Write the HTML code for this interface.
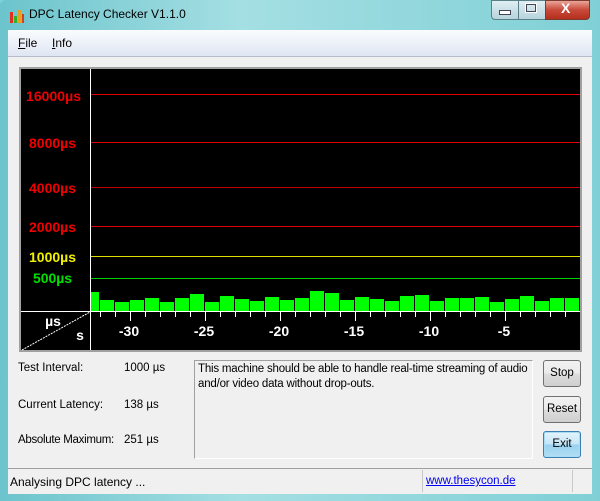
<!DOCTYPE html><html><head><style>
body{margin:0;width:600px;height:501px;overflow:hidden;background:#7fcfd6;font-family:"Liberation Sans",sans-serif;font-size:11.5px;position:relative}
.a{position:absolute}
.btn{position:absolute;left:543px;width:36px;height:25px;border:1px solid #707070;border-radius:3px;background:linear-gradient(#f2f2f2,#ebebeb 50%,#dddddd 50%,#cfcfcf);text-align:center;line-height:25px;font-size:11.5px}
</style></head><body>
<div class="a" style="left:0;top:0;width:600px;height:501px;background:linear-gradient(90deg,#6cc4cc,#a4dfe3 40%,#7fd0d6);border-radius:6px 6px 0 0"></div>
<div class="a" style="left:9px;top:8px;width:16px;height:16px">
<div class="a" style="left:1px;top:4px;width:3px;height:11px;background:#e03020"></div>
<div class="a" style="left:5px;top:8px;width:3px;height:7px;background:#30b030"></div>
<div class="a" style="left:9px;top:2px;width:3px;height:13px;background:#e8a020"></div>
<div class="a" style="left:13px;top:6px;width:2px;height:9px;background:#d04020"></div></div>
<div class="a" style="left:29px;top:7px;font-size:12px;color:#000">DPC Latency Checker V1.1.0</div>
<div class="a" style="left:491px;top:0;width:26px;height:18px;border:1px solid #5a7f86;border-radius:0 0 0 4px;background:linear-gradient(#dfeef2,#b7d4dc)"></div>
<div class="a" style="left:518px;top:0;width:26px;height:18px;border:1px solid #5a7f86;background:linear-gradient(#dfeef2,#b7d4dc)"></div>
<div class="a" style="left:545px;top:0;width:43px;height:18px;border:1px solid #7a3b30;border-radius:0 0 4px 0;background:linear-gradient(#e9a597,#c8493a 50%,#b52e1c)"></div>
<div class="a" style="left:499px;top:10px;width:10px;height:3px;background:#fff;border:1px solid #445"></div>
<div class="a" style="left:526px;top:4px;width:8px;height:6px;border:1px solid #445;outline:1px solid #fff"></div>
<div class="a" style="left:561px;top:0px;color:#fff;font-weight:bold;font-size:14px">X</div>
<div class="a" style="left:8px;top:30px;width:584px;height:463px;background:#f0f0f0"></div>
<div class="a" style="left:8px;top:30px;width:584px;height:26px;background:linear-gradient(#fafcfe,#dfe5f2);border-bottom:1px solid #b5bdcb"></div>
<div class="a" style="left:18px;top:36px;font-size:12px"><u>F</u>ile</div>
<div class="a" style="left:52px;top:36px;font-size:12px"><u>I</u>nfo</div>
<svg class="a" style="left:19px;top:67px" width="563" height="286" viewBox="19 67 563 286">
<rect x="19" y="67" width="563" height="285" fill="#a0a0a0"/>
<rect x="21" y="69" width="559" height="281" fill="#000"/>
<g stroke-width="1">
<line x1="91" y1="94.5" x2="580" y2="94.5" stroke="#e00000"/>
<line x1="91" y1="142.5" x2="580" y2="142.5" stroke="#e00000"/>
<line x1="91" y1="187.5" x2="580" y2="187.5" stroke="#c00000"/>
<line x1="91" y1="226.5" x2="580" y2="226.5" stroke="#e00000"/>
<line x1="91" y1="256.5" x2="580" y2="256.5" stroke="#e0e000"/>
<line x1="91" y1="278.5" x2="580" y2="278.5" stroke="#00d000"/>
</g>
<g font-family="Liberation Sans" font-weight="bold" font-size="14" text-anchor="end">
<text x="81" y="101" fill="#f00000" textLength="55">16000µs</text>
<text x="76" y="148" fill="#f00000" textLength="47">8000µs</text>
<text x="76" y="193" fill="#f00000" textLength="47">4000µs</text>
<text x="76" y="232" fill="#f00000" textLength="47">2000µs</text>
<text x="76" y="262" fill="#f0f000" textLength="47">1000µs</text>
<text x="72" y="283" fill="#00e000" textLength="39">500µs</text>
</g>
<g fill="#00ff00">
<rect x="91" y="292" width="8" height="19"/>
<rect x="100" y="300" width="14" height="11"/><rect x="115" y="302" width="14" height="9"/><rect x="130" y="300" width="14" height="11"/><rect x="145" y="298" width="14" height="13"/><rect x="160" y="302" width="14" height="9"/><rect x="175" y="298" width="14" height="13"/><rect x="190" y="294" width="14" height="17"/><rect x="205" y="302" width="14" height="9"/><rect x="220" y="296" width="14" height="15"/><rect x="235" y="299" width="14" height="12"/><rect x="250" y="301" width="14" height="10"/><rect x="265" y="297" width="14" height="14"/><rect x="280" y="300" width="14" height="11"/><rect x="295" y="298" width="14" height="13"/><rect x="310" y="291" width="14" height="20"/><rect x="325" y="293" width="14" height="18"/><rect x="340" y="300" width="14" height="11"/><rect x="355" y="297" width="14" height="14"/><rect x="370" y="299" width="14" height="12"/><rect x="385" y="301" width="14" height="10"/><rect x="400" y="296" width="14" height="15"/><rect x="415" y="295" width="14" height="16"/><rect x="430" y="301" width="14" height="10"/><rect x="445" y="298" width="14" height="13"/><rect x="460" y="298" width="14" height="13"/><rect x="475" y="297" width="14" height="14"/><rect x="490" y="302" width="14" height="9"/><rect x="505" y="299" width="14" height="12"/><rect x="520" y="296" width="14" height="15"/><rect x="535" y="301" width="14" height="10"/><rect x="550" y="298" width="14" height="13"/><rect x="565" y="298" width="14" height="13"/>
</g>
<line x1="90.5" y1="69" x2="90.5" y2="350" stroke="#fff"/>
<line x1="21" y1="311.5" x2="580" y2="311.5" stroke="#fff"/>
<line x1="22" y1="350" x2="90" y2="312" stroke="#fff" stroke-dasharray="2 1"/>
<g stroke="#fff">
<path d="M100.5 312v5M115.5 312v5M145.5 312v5M160.5 312v5M175.5 312v5M190.5 312v5M220.5 312v5M235.5 312v5M250.5 312v5M265.5 312v5M295.5 312v5M310.5 312v5M325.5 312v5M340.5 312v5M370.5 312v5M385.5 312v5M400.5 312v5M415.5 312v5M445.5 312v5M460.5 312v5M475.5 312v5M490.5 312v5M520.5 312v5M535.5 312v5M550.5 312v5M565.5 312v5"/>
<path d="M130.5 312v9M205.5 312v9M280.5 312v9M355.5 312v9M430.5 312v9M505.5 312v9"/>
</g>
<g font-family="Liberation Sans" font-weight="bold" font-size="14" fill="#fff" text-anchor="middle">
<text x="129" y="336">-30</text><text x="204" y="336">-25</text><text x="279" y="336">-20</text><text x="354" y="336">-15</text><text x="429" y="336">-10</text><text x="504" y="336">-5</text>
<text x="53" y="326">µs</text><text x="80" y="340">s</text>
</g>
</svg>
<div class="a" style="left:18px;top:362px">Test Interval:</div>
<div class="a" style="left:124px;top:362px">1000 µs</div>
<div class="a" style="left:18px;top:399px">Current Latency:</div>
<div class="a" style="left:124px;top:399px">138 µs</div>
<div class="a" style="left:18px;top:434px;letter-spacing:-0.3px">Absolute Maximum:</div>
<div class="a" style="left:124px;top:434px">251 µs</div>
<div class="a" style="left:194px;top:360px;width:331px;height:95px;border:1px solid #a0a0a0;border-right-color:#fff;border-bottom-color:#fff;padding:1px 3px;line-height:15px;letter-spacing:-0.2px">This machine should be able to handle real-time streaming of audio and/or video data without drop-outs.</div>
<div class="btn" style="top:360px">Stop</div>
<div class="btn" style="top:396px">Reset</div>
<div class="btn" style="top:431px;border-color:#3c7fb1;background:linear-gradient(#e5f4fc,#c4e5f6 50%,#98d1ef 50%,#b2def4);box-shadow:inset 0 0 0 1px #a7dcf6">Exit</div>
<div class="a" style="left:8px;top:468px;width:584px;height:25px;background:#f0f0f0;border-top:1px solid #a0a0a0"></div>
<div class="a" style="left:10px;top:475px;font-size:12px">Analysing DPC latency ...</div>
<div class="a" style="left:422px;top:470px;width:1px;height:22px;background:#c8c8c8"></div>
<div class="a" style="left:572px;top:470px;width:1px;height:22px;background:#c8c8c8"></div>
<div class="a" style="left:426px;top:475px;color:#0000ee;text-decoration:underline">www.thesycon.de</div>
</body></html>
